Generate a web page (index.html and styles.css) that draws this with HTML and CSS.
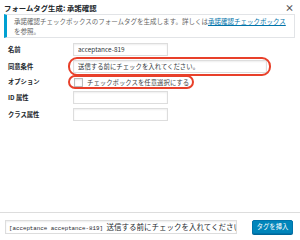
FILE: index.html
```html
<!DOCTYPE html>
<html>
<head>
    <title>フォームタグ生成: 承諾確認</title>
    <link rel="stylesheet" href="styles.css">
</head>
<body>
    <div class="modal">
        <div class="head">
            <h1>フォームタグ生成: 承諾確認</h1>
            <span class="close">×</span>
        </div>

        <div class="notice">
            承諾確認チェックボックスのフォームタグを生成します。詳しくは<a href="#">承諾確認チェックボックス</a>を参照。
        </div>

        <div class="form">
            <label>名前</label>
            <div class="cell"><input class="field name" type="text" value="acceptance-819"></div>

            <label>同意条件</label>
            <div class="cell"><span class="marked"><input class="field wide" type="text" value="送信する前にチェックを入れてください。"></span></div>

            <label>オプション</label>
            <div class="cell"><span class="marked option"><span class="box"></span>チェックボックスを任意選択にする</span></div>

            <label>ID 属性</label>
            <div class="cell"><input class="field name" type="text"></div>

            <label>クラス属性</label>
            <div class="cell"><input class="field name" type="text"></div>
        </div>

        <div class="foot">
            <div class="code">[acceptance acceptance-819] <span class="jp">送信する前にチェックを入れてください。</span></div>
            <button>タグを挿入</button>
        </div>
    </div>
</body>
</html>
```

FILE: styles.css
```css
body {
    margin: 0;
    background: #fff;
    font-family: "Noto Sans CJK JP", "Noto Sans", sans-serif;
    color: #23282d;
}
.modal {
    width: 300px;
    height: 240px;
    display: flex;
    flex-direction: column;
    overflow: hidden;
}
.head {
    display: flex;
    justify-content: space-between;
    align-items: center;
    height: 13px;
    padding: 1px 6px 0 4px;
}
.head h1 {
    margin: 0;
    font-size: 7.4px;
    font-weight: bold;
}
.close {
    font-size: 9px;
    font-weight: bold;
    color: #555;
}
.notice {
    margin: 0 5px 0 4px;
    padding: 1px 4px 2px 7px;
    border: 1px solid #e2e4e7;
    border-left: 3px solid #00a0d2;
    font-size: 6.5px;
    line-height: 10px;
    color: #666;
    height: 19px;
}
.notice a {
    color: #0073aa;
}
.form {
    display: grid;
    grid-template-columns: 65px 1fr;
    align-items: center;
    row-gap: 4px;
    padding: 5px 0 0 8px;
}
.form label {
    font-size: 6.3px;
    font-weight: bold;
    line-height: 10px;
}
.cell {
    display: flex;
    align-items: center;
}
.field {
    display: block;
    box-sizing: border-box;
    height: 13px;
    margin: 0;
    padding: 0 4px;
    border: 1px solid #ddd;
    box-shadow: inset 0 1px 2px rgba(0,0,0,0.07);
    font-family: "Noto Sans CJK JP", "Noto Sans", sans-serif;
    font-size: 6.4px;
    color: #32373c;
    background: #fff;
}
.name { width: 95px; }
.wide { width: 194px; }
.marked {
    position: relative;
    display: inline-flex;
}
.marked::after {
    content: "";
    position: absolute;
    top: -3px;
    bottom: -3px;
    left: -5px;
    right: -4px;
    border: 2px solid #e8402a;
    border-radius: 9px;
}
.option {
    align-items: center;
    height: 10px;
    font-size: 6.4px;
    color: #444;
}
.option::after {
    top: -2px;
    bottom: -2px;
    right: -5px;
    border-radius: 7px;
}
.box {
    width: 7px;
    height: 7px;
    margin: 0 4px 0 1px;
    border: 1px solid #bbb;
    box-shadow: inset 0 1px 2px rgba(0,0,0,0.1);
}
.foot {
    margin-top: auto;
    display: flex;
    align-items: center;
    gap: 15px;
    height: 27px;
    padding: 0 7px 0 5px;
    border-top: 1px solid #ddd;
}
.code {
    box-sizing: border-box;
    width: 232px;
    height: 14px;
    padding: 0 3px;
    border: 1px solid #ddd;
    box-shadow: inset 0 1px 2px rgba(0,0,0,0.07);
    font-family: "Liberation Mono", monospace;
    font-size: 5.8px;
    line-height: 12px;
    color: #23282d;
    white-space: nowrap;
    overflow: hidden;
}
.code .jp {
    font-family: "Noto Sans CJK JP", sans-serif;
    font-size: 7.5px;
}
button {
    width: 41px;
    height: 14px;
    padding: 0;
    border: 1px solid #0073aa;
    border-radius: 2px;
    background: #0085ba;
    box-shadow: 0 1px 0 #006799;
    color: #fff;
    font-family: "Noto Sans CJK JP", sans-serif;
    font-size: 6.3px;
}
```
